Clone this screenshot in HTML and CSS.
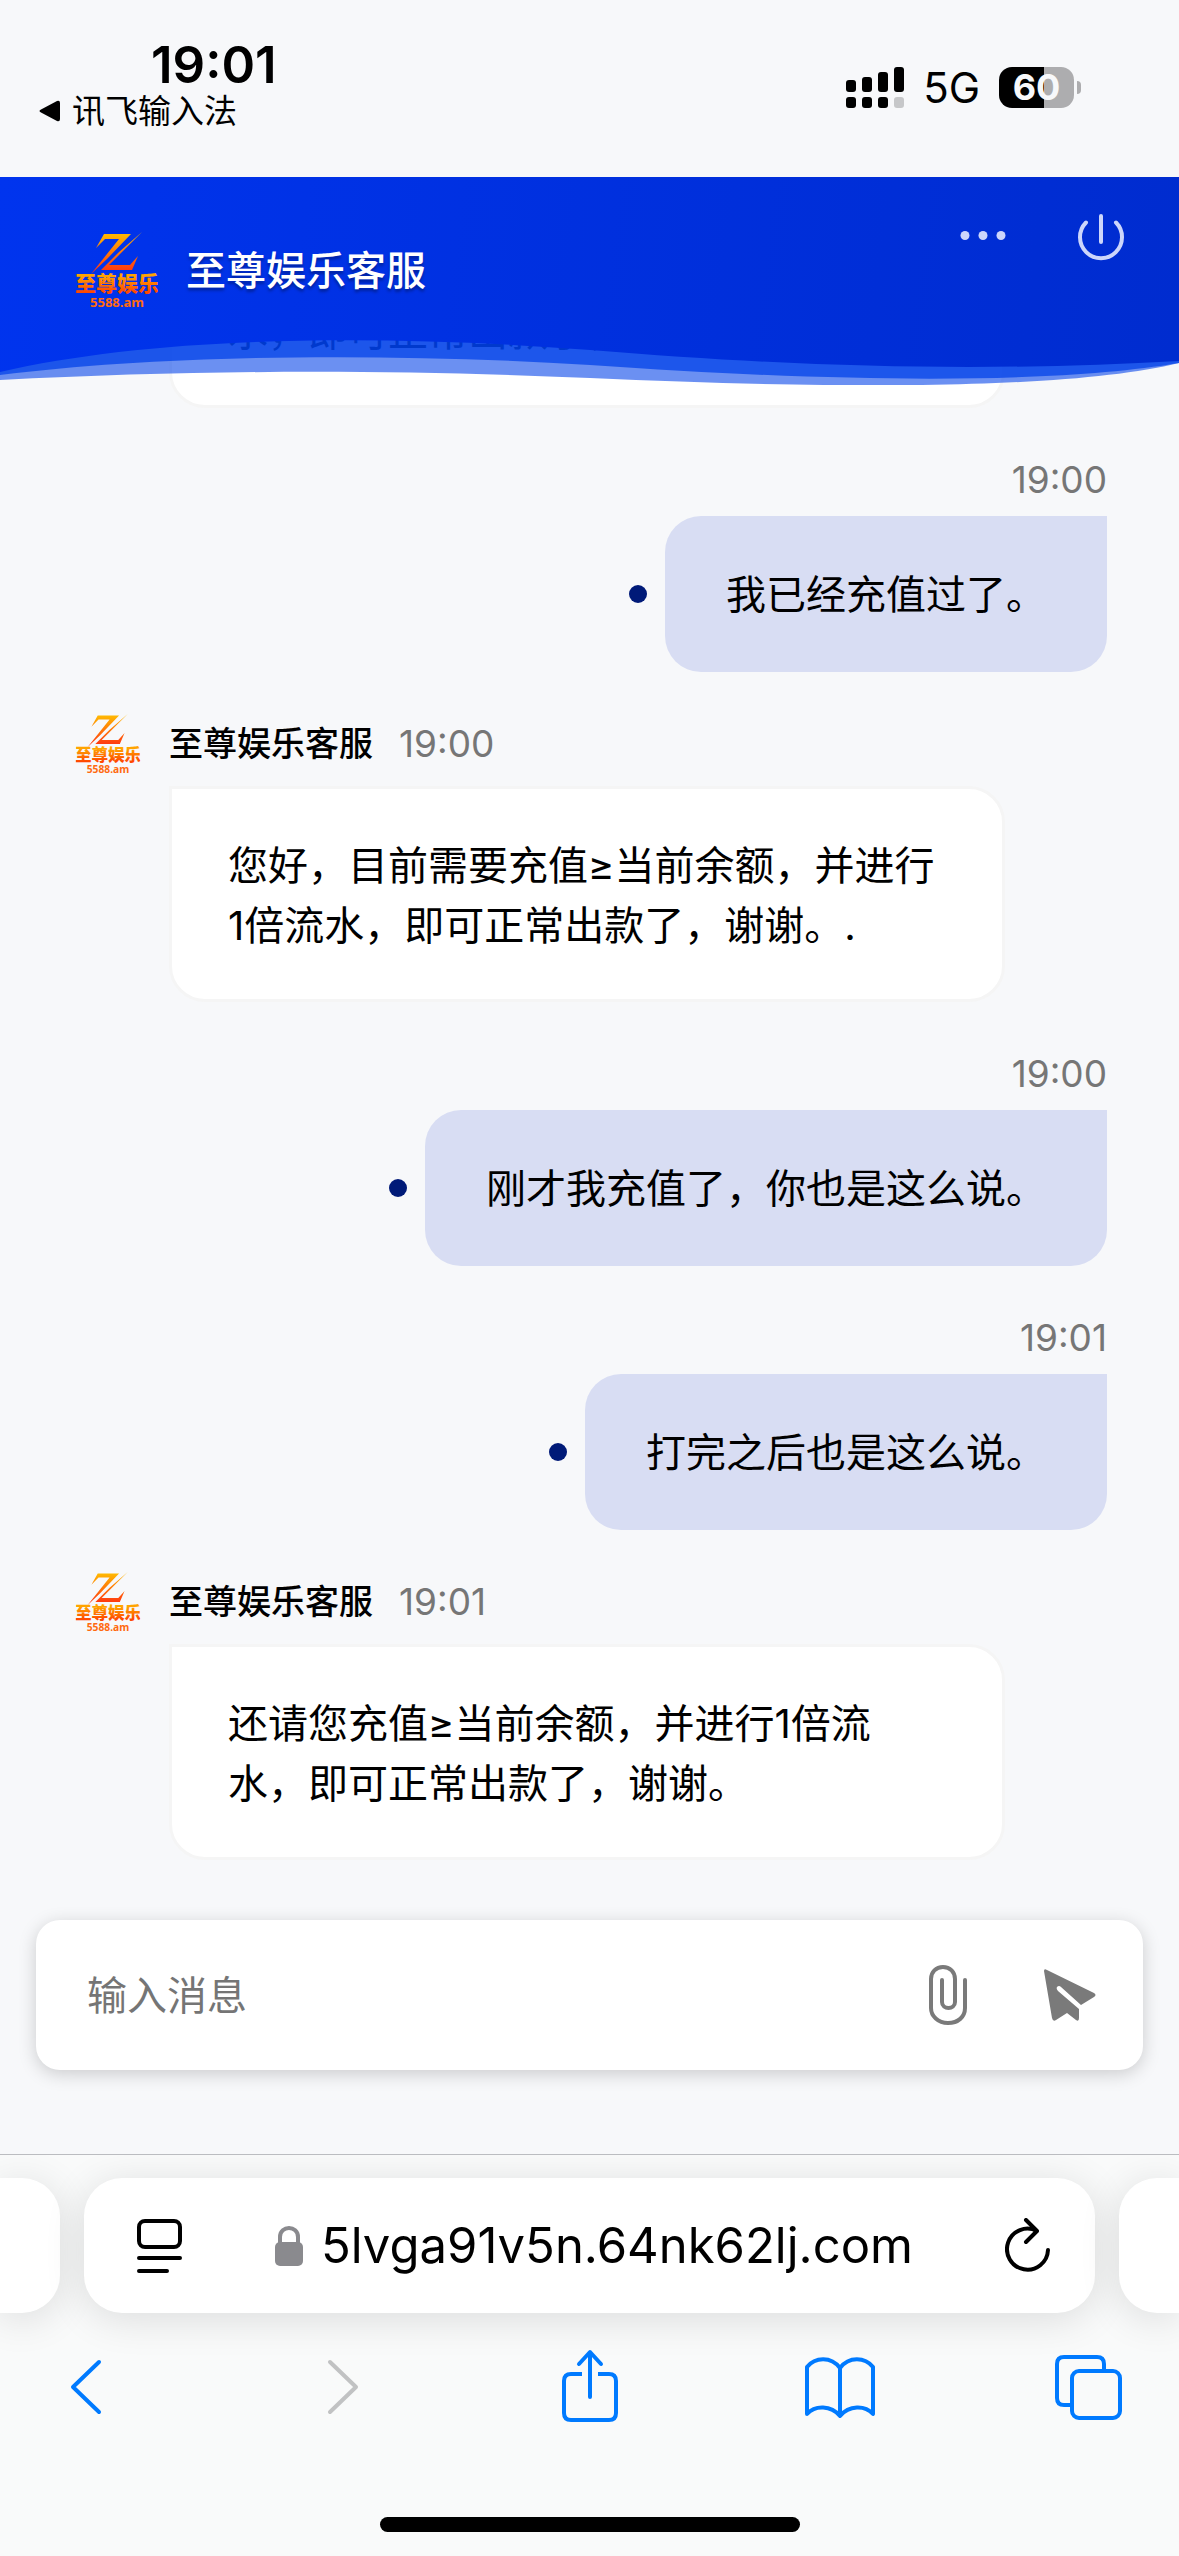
FILE: index.html
```html
<!DOCTYPE html>
<html lang="zh-CN">
<head>
<meta charset="utf-8">
<meta name="viewport" content="width=device-width, initial-scale=1">
<title>至尊娱乐客服</title>
<link rel="stylesheet" href="styles.css">
</head>
<body>
<svg class="defs" width="0" height="0" aria-hidden="true">
  <defs>
    <linearGradient id="flame" gradientUnits="userSpaceOnUse" x1="0" y1="0" x2="0" y2="38"><stop offset="0" stop-color="#ffc000"/><stop offset="1" stop-color="#ff3a10"/></linearGradient>
    <linearGradient id="flameText" gradientUnits="userSpaceOnUse" x1="0" y1="44" x2="0" y2="60"><stop offset="0" stop-color="#ffa400"/><stop offset="1" stop-color="#ff4800"/></linearGradient>
    <symbol id="logo" viewBox="0 0 82 76">
      <path fill="url(#flame)" d="M28 2H55L31 27 15 42 43 7H29L20 16Z"/>
      <path fill="url(#flame)" d="M66 0 33 33H54L62 24 56 38H25L43 20Z"/>
      <text class="logo-name" x="41" y="59" text-anchor="middle" fill="url(#flameText)">至尊娱乐</text>
      <text class="logo-site" x="41" y="75" text-anchor="middle" fill="#ff6a10">5588.am</text>
    </symbol>
  </defs>
</svg>

<div class="status">
  <div class="status-left">
    <span class="clock">19:01</span>
    <a class="back-app" href="#"><svg width="21" height="22" viewBox="0 0 21 22"><path d="M2 9.500 18 1q3-1 3 2v16q0 3-3 2L2 12.500Q-1 11 2 9.500Z"/></svg>讯飞输入法</a>
  </div>
  <div class="status-right">
    <svg width="58" height="41" viewBox="0 0 58 41"><rect y="13" width="10" height="12" rx="3"/><rect x="16" y="10" width="10" height="15" rx="3"/><rect x="32" y="5" width="10" height="20" rx="3"/><rect x="48" width="10" height="25" rx="3"/><rect y="30" width="10" height="11" rx="3"/><rect x="16" y="30" width="10" height="11" rx="3"/><rect x="32" y="30" width="10" height="11" rx="3"/><rect x="48" y="30" width="10" height="11" rx="3" fill="#c6c7c9"/></svg>
    <span class="network">5G</span>
    <span class="battery">60</span>
  </div>
</div>

<div class="chat">
  <header class="chat-head">
    <svg class="wave" viewBox="0 0 1179 208" preserveAspectRatio="none" aria-hidden="true">
      <defs><linearGradient id="sea" gradientUnits="userSpaceOnUse" x1="0" y1="0" x2="1179" y2="160"><stop offset="0" stop-color="#0034ee"/><stop offset="1" stop-color="#002ccf"/></linearGradient></defs>
      <path fill="#0040e8" fill-opacity=".58" d="M0 0H1179V186C1080 210 880 214 590 201 380 192 200 193 0 203Z"/>
      <path fill="#0040e8" fill-opacity=".73" d="M0 0H1179V186C1060 206 860 207 590 188 380 175 160 178 0 198Z"/>
      <path fill="url(#sea)" d="M0 0H1179V184C1000 194 820 192 590 173 370 156 150 160 0 195Z"/>
    </svg>
    <svg class="head-logo" viewBox="0 0 82 76" role="img" aria-label="至尊娱乐"><use href="#logo"/></svg>
    <h1>至尊娱乐客服</h1>
    <div class="head-actions">
      <button type="button" aria-label="更多"><svg width="46" height="48" viewBox="0 0 46 48" fill="#ccd6fb"><circle cx="5" cy="22.500" r="4.500"/><circle cx="23" cy="22.500" r="4.500"/><circle cx="41" cy="22.500" r="4.500"/></svg></button>
      <button type="button" aria-label="结束"><svg width="46" height="48" viewBox="0 0 46 48" fill="none" stroke="#ccd6fb" stroke-width="4" stroke-linecap="round"><path d="M8 9.500A21 21 0 1 0 38 9.500M23 3V29"/></svg></button>
    </div>
  </header>

  <main class="messages">
    <article class="in"><p class="bubble">水，即可正常出款了，谢谢。</p></article>
    <article class="out"><time>19:00</time><p class="bubble">我已经充值过了。</p></article>
    <article class="in">
      <div class="sender"><svg class="avatar" viewBox="0 0 82 76" role="img" aria-label="至尊娱乐"><use href="#logo"/></svg><strong>至尊娱乐客服</strong><time>19:00</time></div>
      <p class="bubble">您好，目前需要充值≥当前余额，并进行1倍流水，即可正常出款了，谢谢。.</p>
    </article>
    <article class="out"><time>19:00</time><p class="bubble">刚才我充值了，你也是这么说。</p></article>
    <article class="out"><time>19:01</time><p class="bubble">打完之后也是这么说。</p></article>
    <article class="in">
      <div class="sender"><svg class="avatar" viewBox="0 0 82 76" role="img" aria-label="至尊娱乐"><use href="#logo"/></svg><strong>至尊娱乐客服</strong><time>19:01</time></div>
      <p class="bubble">还请您充值≥当前余额，并进行1倍流水，即可正常出款了，谢谢。</p>
    </article>
  </main>

  <form class="composer">
    <input type="text" placeholder="输入消息" aria-label="输入消息">
    <button type="button" aria-label="附件"><svg width="52" height="60" viewBox="0 0 52 60" fill="none" stroke="#7a7a7a" stroke-width="4" stroke-linecap="round"><path d="M43 15V43C43 52 36 58 26 58S9 51 9 43V14C9 7 14 2 21 2S33 7 33 14V37C33 45 20 45 20 37V15"/></svg></button>
    <button type="button" aria-label="发送"><svg width="52" height="52" viewBox="0 0 52 52" fill="#7a7a7a"><path d="M0 2Q0-1 3 1L50 24Q53 26 50 28L37 36 17 18Q15 16 13 18 12 20 14 22L35 40V49Q35 53 32 51L23 44 12 51Q9 53 8 49Z"/></svg></button>
  </form>
</div>

<footer class="browser">
  <div class="tabs">
    <div class="tab-edge tab-prev"></div>
    <div class="address">
      <button type="button" aria-label="页面菜单"><svg width="46" height="56" viewBox="0 0 46 56" fill="none" stroke="#000" stroke-width="4" stroke-linecap="round"><rect x="2" y="3" width="41" height="26" rx="6"/><path d="M2 40H43M2 53H30"/></svg></button>
      <div class="url"><svg width="28" height="40" viewBox="0 0 28 40"><rect y="16" width="28" height="24" rx="5" fill="#8a8a8e"/><path d="M5 17V11C5-1 23-1 23 11V17" fill="none" stroke="#8a8a8e" stroke-width="4"/></svg><span>5lvga91v5n.64nk62lj.com</span></div>
      <button type="button" aria-label="重新载入"><svg width="46" height="56" viewBox="0 0 46 56" fill="none" stroke="#000" stroke-width="4" stroke-linecap="round" stroke-linejoin="round"><path d="M43 32A20.500 20.500 0 1 1 32 13M21 2 32 13 21 24" /></svg></button>
    </div>
    <div class="tab-edge tab-next"></div>
  </div>
  <nav class="toolbar">
    <button type="button" aria-label="后退"><svg viewBox="0 0 70 74"><path d="M45 13 19 38 45 63"/></svg></button>
    <button type="button" aria-label="前进" disabled><svg viewBox="0 0 70 74"><path d="M26 13 52 38 26 63"/></svg></button>
    <button type="button" aria-label="共享"><svg viewBox="0 0 70 74"><path stroke-linecap="butt" d="M27 25H16Q9 25 9 32V64Q9 71 16 71H54Q61 71 61 64V32Q61 25 54 25H43"/><path d="M35 48V4M24 15 35 3 46 15"/></svg></button>
    <button type="button" aria-label="书签"><svg viewBox="0 0 70 74"><path d="M35 19C26 7 10 8 2 18V65C10 56 26 56 35 67 44 56 60 56 68 65V18C60 8 44 7 35 19V66"/></svg></button>
    <button type="button" aria-label="标签页"><svg viewBox="0 0 70 74"><rect x="17" y="22" width="48" height="47" rx="7"/><path d="M16 56H9Q2 56 2 49V15Q2 8 9 8H42Q49 8 49 15V21"/></svg></button>
  </nav>
  <div class="home"></div>
</footer>
</body>
</html>
```
FILE: styles.css
```css
* { box-sizing: border-box; }

body {
  margin: 0;
  min-height: 100vh;
  display: flex;
  flex-direction: column;
  background: #f7f8fa;
  color: #000;
  font-family: Inter, "Noto Sans CJK SC", sans-serif;
  font-size: 40px;
  line-height: 60px;
}

button { padding: 0; border: 0; background: none; display: flex; }
svg { display: block; flex: none; }
.defs { position: absolute; }
.logo-name { font: 900 21px "Noto Sans CJK SC", sans-serif; }
.logo-site { font: 700 13px "Noto Sans", sans-serif; }

/* Status bar */
.status {
  height: 177px;
  padding: 40px 105px 0 39px;
  display: flex;
  justify-content: space-between;
}
.clock {
  display: block;
  padding-left: 112px;
  font-size: 51px;
  font-weight: 600;
  line-height: 50px;
}
.back-app {
  display: flex;
  align-items: center;
  gap: 12px;
  font-size: 33px;
  line-height: 42px;
  color: inherit;
  text-decoration: none;
}
.status-right {
  height: 95px;
  display: flex;
  align-items: center;
  gap: 19px;
}
.network { font-size: 42px; }
.battery {
  position: relative;
  width: 75px;
  height: 41px;
  border-radius: 13px;
  background: linear-gradient(90deg, #000 60%, #adadaf 60%);
  color: #f7f8fa;
  font-size: 36px;
  font-weight: 700;
  line-height: 41px;
  text-align: center;
}
.battery::after {
  content: "";
  position: absolute;
  right: -7px;
  top: 14px;
  width: 4px;
  height: 13px;
  border-radius: 0 6px 6px 0;
  background: #adadaf;
}

/* Chat */
.chat { flex: 1; display: flex; flex-direction: column; }
.chat-head {
  position: relative;
  z-index: 1;
  height: 164px;
  padding: 36px 55px 0 76px;
  display: flex;
  align-items: flex-start;
}
.wave { position: absolute; left: 0; top: 0; width: 100%; height: 208px; }
.head-logo { position: relative; width: 82px; height: 76px; margin-top: 19px; }
h1 {
  position: relative;
  flex: 1;
  margin: 28px 0 0 28px;
  color: #fff;
  font-size: 40px;
  font-weight: 500;
  line-height: 60px;
  text-shadow: 0 3px 3px rgba(0, 0, 0, .3);
}
.head-actions { position: relative; display: flex; gap: 72px; }

.messages {
  flex: 1;
  margin-top: -89px;
  padding: 0 72px 0 75px;
}
.bubble { margin: 0; border-radius: 36px; }
.in .bubble {
  width: 836px;
  max-width: 100%;
  margin-left: 94px;
  padding: 47px 56px 43px;
  border: 3px solid #f5f5f5;
  border-top-left-radius: 0;
  background: #fff;
}
.sender {
  display: flex;
  align-items: center;
  padding: 42px 0 12px;
}
.avatar { width: 66px; height: 60px; }
.sender strong { margin: 0 26px 0 28px; font-size: 34px; font-weight: 500; }
time { color: #767676; font-size: 37px; }
.out { display: flex; flex-direction: column; align-items: flex-end; }
.out time { margin: 48px 0 12px; line-height: 48px; }
.out .bubble {
  position: relative;
  padding: 49px 61px 47px;
  border-top-right-radius: 0;
  background: #d8ddf3;
}
.out .bubble::before {
  content: "";
  position: absolute;
  left: -36px;
  top: calc(50% - 9px);
  width: 18px;
  height: 18px;
  border-radius: 50%;
  background: #001a78;
}

.composer {
  height: 150px;
  margin: 60px 36px 84px;
  padding: 0 47px 0 51px;
  display: flex;
  align-items: center;
  gap: 70px;
  border-radius: 24px;
  background: #fff;
  box-shadow: 0 4px 18px rgba(0, 0, 0, .18);
}
.composer input {
  flex: 1;
  min-width: 0;
  padding: 2px 0 0;
  border: 0;
  outline: 0;
  background: none;
  font: inherit;
}
.composer input::placeholder { color: #757575; opacity: 1; }

/* Browser bars */
.browser {
  border-top: 1px solid #bbbcc0;
  background: #f9fafa;
  overflow: hidden;
}
.tabs { display: flex; gap: 24px; padding-top: 23px; }
.tab-edge, .address {
  height: 135px;
  background: #fff;
  box-shadow: 0 6px 40px rgba(0, 0, 0, .12);
}
.tab-edge { width: 60px; }
.tab-prev { border-radius: 0 38px 38px 0; }
.tab-next { border-radius: 38px 0 0 38px; }
.address {
  flex: 1;
  padding: 0 44px 0 53px;
  display: flex;
  align-items: center;
  justify-content: space-between;
  border-radius: 38px;
}
.url { display: flex; align-items: center; gap: 18px; font-size: 49px; }
.toolbar {
  display: flex;
  justify-content: space-between;
  padding: 36px 54px 0;
}
.toolbar svg {
  width: 70px;
  height: 74px;
  fill: none;
  stroke: #007aff;
  stroke-width: 4;
  stroke-linecap: round;
  stroke-linejoin: round;
}
.toolbar :disabled svg { stroke: #c1c2c3; }
.home {
  width: 420px;
  height: 15px;
  margin: 94px auto 24px;
  border-radius: 8px;
  background: #000;
}
```
